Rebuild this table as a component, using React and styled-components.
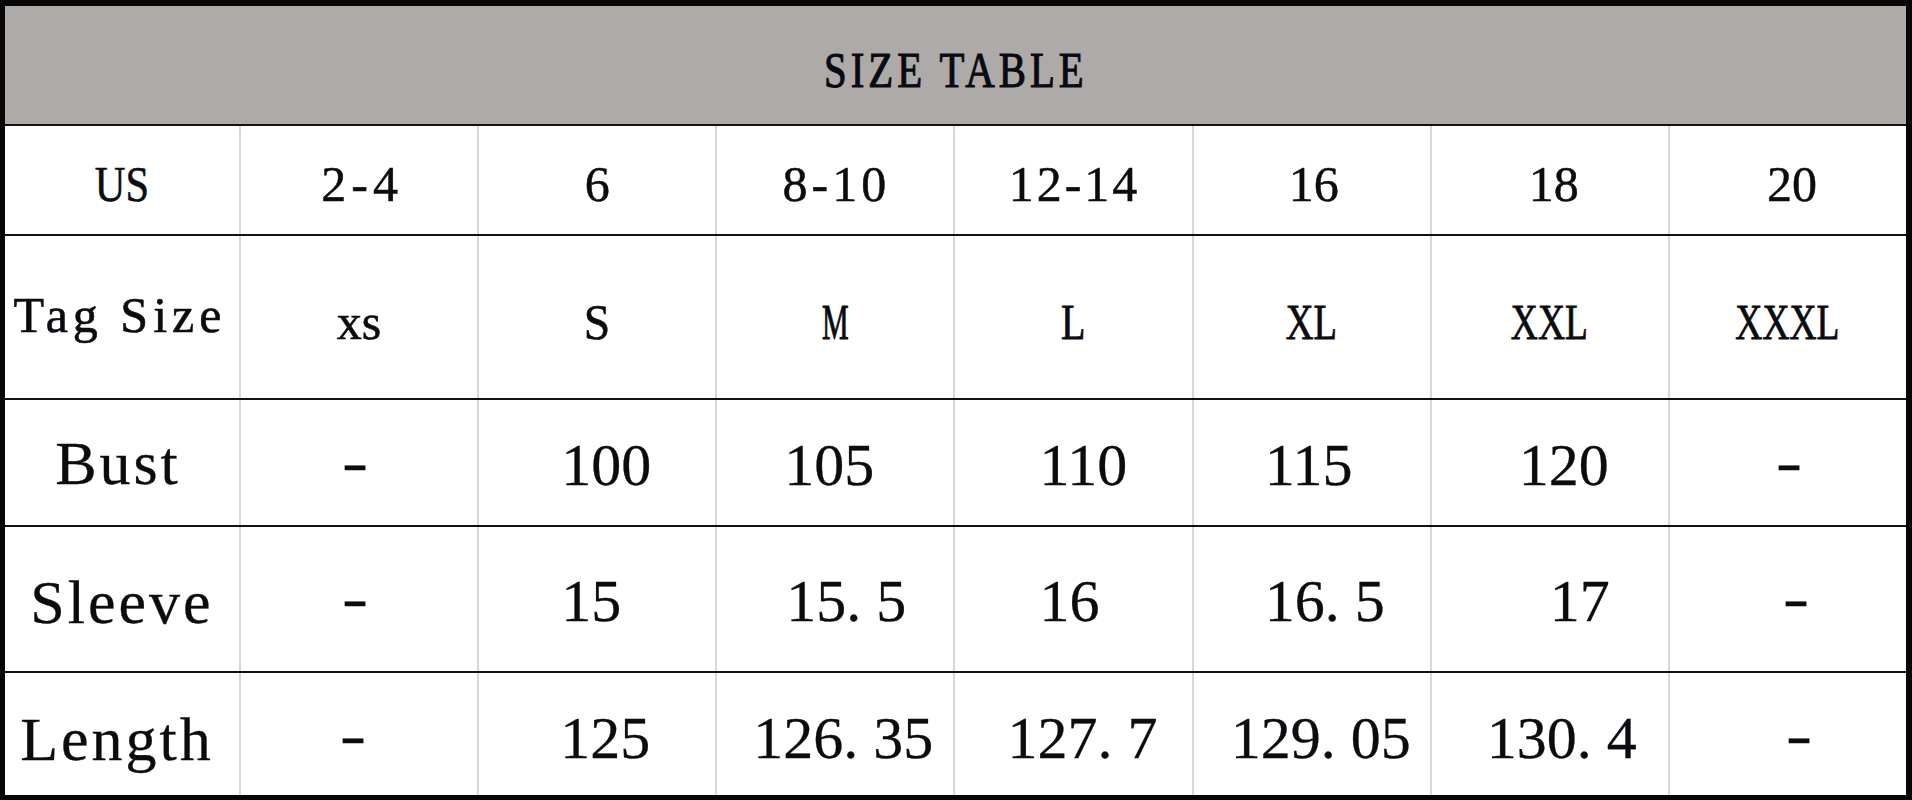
import React from 'react';
import styled, { createGlobalStyle } from 'styled-components';

const GlobalStyle = createGlobalStyle`
  html, body {
    margin: 0;
    padding: 0;
    background: #ffffff;
  }
  body {
    font-family: "Liberation Serif", "Times New Roman", serif;
    color: #0c0c10;
  }
`;

const Frame = styled.div`
  width: 1912px;
  height: 800px;
  box-sizing: border-box;
  border-style: solid;
  border-color: #060606;
  border-width: 6px 6px 5px 5px;
  display: flex;
  flex-direction: column;
  background: #ffffff;
  overflow: hidden;
`;

const Title = styled.div`
  height: 118px;
  flex: none;
  box-sizing: border-box;
  padding-top: 10px;
  background: #adaaa8;
  display: flex;
  align-items: center;
  justify-content: center;
  font-size: 51px;
  line-height: 1;
  color: #0a0a12;
`;

const Row = styled.div`
  flex: none;
  height: ${p => p.$h}px;
  box-sizing: border-box;
  border-top: 2px solid #111111;
  display: grid;
  grid-template-columns: 234px repeat(7, 1fr);
`;

const Cell = styled.div`
  display: flex;
  align-items: center;
  justify-content: center;
  box-sizing: border-box;
  padding-top: ${p => p.$pt}px;
  font-size: ${p => p.$size}px;
  line-height: 1;
  overflow: hidden;
  & + & {
    border-left: 2px solid #d8d8d8;
  }
`;

const Glyph = styled.span`
  display: inline-block;
  white-space: pre;
  font-size: ${p => (p.$size ? `${p.$size}px` : 'inherit')};
  letter-spacing: ${p => p.$ls || 0}px;
  transform: scaleX(${p => p.$sx || 1});
  -webkit-text-stroke: ${p => p.$stroke || 0.3}px currentColor;
  margin: ${p => {
    const dx = p.$dx || 0;
    const dy = p.$dy || 0;
    return `${Math.max(0, dy * 2)}px ${Math.max(0, -dx * 2)}px ${Math.max(0, -dy * 2)}px ${Math.max(0, dx * 2)}px`;
  }};
`;

const dash = { t: '-', dy: -3, sx: 1.3 };

const rows = [
  {
    h: 110,
    size: 50,
    pt: 7,
    cells: [
      { t: 'US', sx: 0.85, stroke: 0.6 },
      { t: '2-4', ls: 5, dx: 3, stroke: 0.5 },
      { t: '6', stroke: 0.5 },
      { t: '8-10', ls: 4, dx: 1, stroke: 0.5 },
      { t: '12-14', ls: 3, dx: 1, stroke: 0.5 },
      { t: '16', dx: 2, stroke: 0.5 },
      { t: '18', dx: 4, stroke: 0.5 },
      { t: '20', dx: 4, stroke: 0.5 },
    ],
  },
  {
    h: 164,
    size: 50,
    pt: 9,
    cells: [
      { t: 'Tag Size', ls: 5, dx: -2, dy: -7, stroke: 0.6 },
      { t: 'xs', stroke: 0.6 },
      { t: 'S', sx: 0.95, stroke: 0.6 },
      { t: 'M', sx: 0.6, stroke: 1 },
      { t: 'L', sx: 0.8, stroke: 0.8 },
      { t: 'XL', sx: 0.77, stroke: 0.8 },
      { t: 'XXL', sx: 0.75, stroke: 0.8 },
      { t: 'XXXL', sx: 0.75, stroke: 0.8 },
    ],
  },
  {
    h: 127,
    size: 60,
    pt: 5,
    cells: [
      { t: 'Bust', size: 62, ls: 3, dx: -4, dy: -2 },
      { ...dash, dx: -4 },
      { t: '100', dx: 9 },
      { t: '105', dx: -6 },
      { t: '110', dx: 10 },
      { t: '115', dx: -3 },
      { t: '120', dx: 14 },
      { ...dash, dx: 1 },
    ],
  },
  {
    h: 146,
    size: 60,
    pt: 4,
    cells: [
      { t: 'Sleeve', size: 62, ls: 3, dx: 0, dy: 1 },
      { ...dash, dx: -4 },
      { t: '15', dx: -6 },
      { t: '15. 5', dx: 11 },
      { t: '16', dx: -4 },
      { t: '16. 5', dx: 13 },
      { t: '17', dx: 30 },
      { ...dash, dx: 8 },
    ],
  },
  {
    h: 124,
    size: 60,
    pt: 7,
    cells: [
      { t: 'Length', size: 62, ls: 3, dx: -5, dy: 1 },
      { ...dash, dx: -6 },
      { t: '125', dx: 8 },
      { t: '126. 35', dx: 8 },
      { t: '127. 7', dx: 9 },
      { t: '129. 05', dx: 9 },
      { t: '130. 4', dx: 12 },
      { ...dash, dx: 11 },
    ],
  },
];

function SizeTable() {
  return (
    <Frame>
      <Title>
        <Glyph $sx={0.8} $ls={5} $stroke={1.1}>SIZE TABLE</Glyph>
      </Title>
      {rows.map((row, i) => (
        <Row key={i} $h={row.h}>
          {row.cells.map((c, j) => (
            <Cell key={j} $size={row.size} $pt={row.pt}>
              <Glyph
                $size={c.size}
                $ls={c.ls}
                $sx={c.sx}
                $dx={c.dx}
                $dy={c.dy}
                $stroke={c.stroke}
              >
                {c.t}
              </Glyph>
            </Cell>
          ))}
        </Row>
      ))}
    </Frame>
  );
}

export default function App() {
  return (
    <>
      <GlobalStyle />
      <SizeTable />
    </>
  );
}
